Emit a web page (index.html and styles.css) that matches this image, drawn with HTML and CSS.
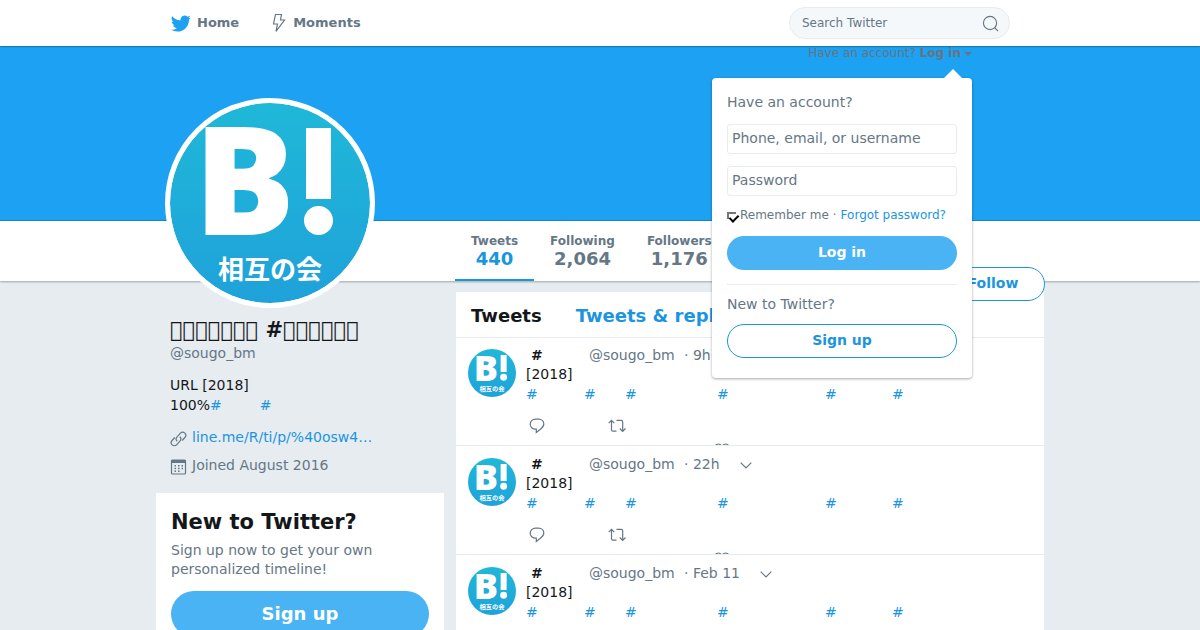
FILE: index.html
```html
<!DOCTYPE html>
<html lang="en">
<head>
<meta charset="utf-8">
<meta name="viewport" content="width=device-width, initial-scale=1">
<title>@sougo_bm | Twitter</title>
<link rel="stylesheet" href="styles.css">
</head>
<body>
<svg class="defs" aria-hidden="true">
  <defs>
    <linearGradient id="sky" x1="0" y1="0" x2="0" y2="1">
      <stop offset="0" stop-color="#1fb8d8"/>
      <stop offset="1" stop-color="#1fa2da"/>
    </linearGradient>
    <symbol id="logo" viewBox="0 0 200 200">
      <circle cx="100" cy="100" r="100" fill="url(#sky)"/>
      <text class="logo-b" x="24" y="132">B</text>
      <rect x="136" y="25" width="25" height="71" fill="#fff"/>
      <circle cx="148.500" cy="117.500" r="14.500" fill="#fff"/>
      <text class="logo-name" x="100" y="176" text-anchor="middle">相互の会</text>
    </symbol>
    <symbol id="reply" viewBox="0 0 16 16">
      <path d="M6.500 1.200h3c3 0 5.300 2 5.300 4.900 0 2.300-1.400 3.700-3.400 5.200L7.300 14.500v-3.400h-.8c-3 0-5.300-2-5.300-4.900s2.300-5 5.300-5z"/>
    </symbol>
    <symbol id="retweet" viewBox="0 0 18 14">
      <path d="M.7 4.200 3.500 1.300 6.300 4.200M3.500 1.500v9.300c0 .9.500 1.400 1.400 1.400H8.500M8.500 1.300h4.800c.9 0 1.400.5 1.400 1.400v9.300M11.800 9.500l2.900 2.900 2.800-2.900"/>
    </symbol>
    <symbol id="heart" viewBox="0 0 16 14">
      <path d="M8 3.500C7 1.600 5.800 1 4.500 1 2.400 1 1 2.600 1 4.600c0 3.200 3.500 6.100 7 8.400 3.500-2.300 7-5.200 7-8.400C15 2.600 13.600 1 11.500 1 10.200 1 9 1.600 8 3.500z"/>
    </symbol>
    <symbol id="chevron" viewBox="0 0 12 7">
      <path d="M.7.7 6 6 11.300.7"/>
    </symbol>
  </defs>
</svg>

<header class="topbar">
  <div class="container topbar-row">
    <nav class="global-nav">
      <a class="nav-link" href="#home">
        <svg class="bird" viewBox="0 0 24 20"><path d="M23.600 2.700c-.9.400-1.800.7-2.800.8 1-.6 1.800-1.600 2.100-2.700-.9.600-2 1-3.100 1.200A4.900 4.900 0 0 0 11.500 6.400C7.500 6.200 3.900 4.300 1.500 1.300a4.900 4.900 0 0 0 1.500 6.500c-.8 0-1.500-.2-2.200-.6v.1c0 2.400 1.700 4.300 3.900 4.800-.7.200-1.500.2-2.200.1.600 2 2.400 3.300 4.600 3.400A9.800 9.800 0 0 1 .1 17.500a13.800 13.800 0 0 0 7.500 2.200c9.100 0 14-7.500 14-14v-.6c.9-.7 1.800-1.600 2-2.400z"/></svg>
        <span>Home</span>
      </a>
      <a class="nav-link" href="#moments">
        <svg class="bolt line-icon" viewBox="0 0 14 20"><path d="M3.500 1.500h6L8.500 7h4L4 18.300 5.500 11H1.500z"/></svg>
        <span>Moments</span>
      </a>
    </nav>
    <form class="search">
      <input class="search-input" type="search" placeholder="Search Twitter" aria-label="Search Twitter">
      <button class="search-button" type="button" aria-label="Search">
        <svg class="line-icon" viewBox="0 0 18 18"><circle cx="8.500" cy="8.500" r="7"/><path d="m13.500 13.500 3.500 3.500"/></svg>
      </button>
    </form>
    <div class="session">
      <a class="session-link" href="#login">Have an account? <b>Log in</b><i class="caret"></i></a>
      <div class="dropdown">
        <form class="signin">
          <p class="dropdown-title">Have an account?</p>
          <input class="field" type="text" placeholder="Phone, email, or username" aria-label="Phone, email, or username">
          <input class="field" type="password" placeholder="Password" aria-label="Password">
          <div class="remember">
            <input class="tick" id="remember" type="checkbox" checked>
            <label for="remember">Remember me</label><span>·</span><a href="#forgot">Forgot password?</a>
          </div>
          <button class="button primary" type="button">Log in</button>
        </form>
        <div class="signup">
          <p class="dropdown-title">New to Twitter?</p>
          <button class="button outline" type="button">Sign up</button>
        </div>
      </div>
    </div>
  </div>
</header>

<section class="banner"></section>
<section class="profile-bar">
  <div class="container profile-row">
    <svg class="profile-photo" role="img" aria-label="Profile photo"><use href="#logo"/></svg>
    <nav class="stats">
      <a class="stat active" href="#tweets"><span>Tweets</span><b>440</b></a>
      <a class="stat" href="#following"><span>Following</span><b>2,064</b></a>
      <a class="stat" href="#followers"><span>Followers</span><b>1,176</b></a>
    </nav>
    <button class="button outline follow" type="button">Follow</button>
  </div>
</section>

<main class="container columns">
  <aside class="sidebar">
    <div class="bio">
      <h1 class="name">&#xE000;&#xE000;&#xE000;&#xE000;&#xE000;&#xE000;&#xE000; #&#xE000;&#xE000;&#xE000;&#xE000;&#xE000;&#xE000;</h1>
      <a class="handle" href="#profile">@sougo_bm</a>
      <p class="about">URL [2018]<br>100%<a class="bio-tag" href="#tag">#</a><a href="#tag">#</a></p>
      <p class="meta">
        <svg class="line-icon" viewBox="0 0 16 16"><path d="M6.700 10.300a3.200 3.200 0 0 1-.1-4.500l3.300-3.600a3.100 3.100 0 0 1 4.500 4.300l-2.700 3M9.300 5.700a3.200 3.200 0 0 1 .1 4.500l-3.300 3.600a3.100 3.100 0 0 1-4.500-4.300l2.700-3"/></svg>
        <a href="#site">line.me/R/ti/p/%40osw4…</a>
      </p>
      <p class="meta">
        <svg class="line-icon" viewBox="0 0 16 16"><rect x="1" y="1" width="14" height="14" rx="1"/><path d="M1 2.500h14" stroke-width="3"/><path d="M4 6.800h9M4 9.500h9M4 12.200h6" stroke-dasharray="1.500 2" stroke-width="1.500"/></svg>
        <span>Joined August 2016</span>
      </p>
    </div>
    <section class="join">
      <h2>New to Twitter?</h2>
      <p>Sign up now to get your own personalized timeline!</p>
      <button class="button primary large" type="button">Sign up</button>
    </section>
  </aside>

  <section class="timeline">
    <div class="tabs">
      <h2>Tweets</h2>
      <a href="#replies">Tweets &amp; replies</a>
    </div>
    <article class="tweet">
      <svg class="avatar"><use href="#logo"/></svg>
      <div class="tweet-body">
        <div class="byline"><b>#</b><span class="user">@sougo_bm</span><a href="#status">· 9h</a></div>
        <p>[2018]</p>
        <p class="tags"><a href="#tag">#</a><a href="#tag">#</a><a href="#tag">#</a><a href="#tag">#</a><a href="#tag">#</a><a href="#tag">#</a></p>
        <div class="actions">
          <button type="button" aria-label="Reply"><svg class="line-icon"><use href="#reply"/></svg></button>
          <button type="button" aria-label="Retweet"><svg class="line-icon wide"><use href="#retweet"/></svg></button>
          <button class="like" type="button" aria-label="Like"><svg class="line-icon"><use href="#heart"/></svg></button>
        </div>
      </div>
    </article>
    <article class="tweet">
      <svg class="avatar"><use href="#logo"/></svg>
      <div class="tweet-body">
        <div class="byline"><b>#</b><span class="user">@sougo_bm</span><a href="#status">· 22h</a><button type="button" aria-label="More"><svg class="line-icon more"><use href="#chevron"/></svg></button></div>
        <p>[2018]</p>
        <p class="tags"><a href="#tag">#</a><a href="#tag">#</a><a href="#tag">#</a><a href="#tag">#</a><a href="#tag">#</a><a href="#tag">#</a></p>
        <div class="actions">
          <button type="button" aria-label="Reply"><svg class="line-icon"><use href="#reply"/></svg></button>
          <button type="button" aria-label="Retweet"><svg class="line-icon wide"><use href="#retweet"/></svg></button>
          <button class="like" type="button" aria-label="Like"><svg class="line-icon"><use href="#heart"/></svg></button>
        </div>
      </div>
    </article>
    <article class="tweet">
      <svg class="avatar"><use href="#logo"/></svg>
      <div class="tweet-body">
        <div class="byline"><b>#</b><span class="user">@sougo_bm</span><a href="#status">· Feb 11</a><button type="button" aria-label="More"><svg class="line-icon more"><use href="#chevron"/></svg></button></div>
        <p>[2018]</p>
        <p class="tags"><a href="#tag">#</a><a href="#tag">#</a><a href="#tag">#</a><a href="#tag">#</a><a href="#tag">#</a><a href="#tag">#</a></p>
      </div>
    </article>
  </section>
</main>
</body>
</html>
```
FILE: styles.css
```css
* { box-sizing: border-box; }

body {
  margin: 0;
  height: 100vh;
  overflow: hidden;
  background: #e6ecf0;
  color: #14171a;
  font: 14px/20px "DejaVu Sans", sans-serif;
}

h1, h2, p { margin: 0; }
a { color: #1b95e0; text-decoration: none; }
button { padding: 0; border: 0; background: none; font: inherit; color: inherit; }
svg { display: block; flex: none; }

.defs { position: absolute; width: 0; height: 0; }
.container { max-width: 888px; margin: 0 auto; }
.line-icon { width: 16px; height: 16px; fill: none; stroke: #657786; stroke-width: 1.2px; }

.logo-b { font: 800 150px "Open Sans", sans-serif; fill: #fff; }
.logo-name { font: 700 26px "Noto Sans CJK JP", sans-serif; fill: #fff; }

/* Top bar */
.topbar { position: relative; z-index: 2; background: #fff; box-shadow: 0 0 2px rgba(0, 0, 0, 0.7); }
.topbar-row { position: relative; display: flex; align-items: center; justify-content: space-between; height: 46px; padding: 0 34px 0 15px; }
.global-nav { display: flex; gap: 32px; }
.nav-link { display: flex; align-items: center; gap: 6px; color: #657786; font-size: 13px; font-weight: 700; }
.bird { width: 20px; height: 17px; fill: #1da1f2; }
.bolt { width: 16px; height: 20px; }

.search { display: flex; align-items: center; width: 221px; height: 32px; padding: 0 10px 0 12px; border: 1px solid #e6ecf0; border-radius: 16px; background: #f5f8fa; }
.search-input { flex: 1; min-width: 0; padding: 0; border: 0; background: none; font: 12px "DejaVu Sans", sans-serif; }
.search-button .line-icon { width: 17px; height: 17px; }
input::placeholder { color: #657786; opacity: 1; }

.session { position: absolute; top: 45px; right: 72px; }
.session-link { display: block; color: #66757f; font-size: 12px; line-height: 16px; white-space: nowrap; }
.caret { display: inline-block; margin-left: 3px; border: 4px solid transparent; border-top-color: #66757f; border-bottom: 0; vertical-align: middle; }

.dropdown { position: absolute; top: 33px; right: 0; width: 260px; padding: 14px 15px 20px; border-radius: 4px; background: #fff; color: #657786; box-shadow: 0 1px 3px rgba(0, 0, 0, 0.35); }
.dropdown::before { content: ""; position: absolute; top: -9px; right: 10px; border: 9px solid transparent; border-top: 0; border-bottom-color: #fff; }
.signin { display: flex; flex-direction: column; }
.dropdown-title { line-height: 20px; }
.field { height: 30px; margin-top: 12px; padding: 0 4px 2px; border: 1px solid #e6ecf0; border-radius: 3px; font: inherit; }
.remember { display: flex; align-items: center; gap: 4px; height: 20px; margin: 9px 0 11px; font-size: 12px; }
.tick { appearance: none; position: relative; width: 9px; height: 7px; margin: 1px 0 0; border: 2px solid #767676; border-width: 2px 0 0 2px; }
.tick:checked::after { content: ""; position: absolute; left: 2px; top: -1px; width: 4px; height: 7px; border: solid #000; border-width: 0 2px 2px 0; transform: rotate(45deg); }

.button { height: 34px; padding-bottom: 2px; border-radius: 100px; font-weight: 700; text-align: center; }
.primary { background: #4ab3f4; color: #fff; }
.outline { border: 1px solid #1b95e0; background: #fff; color: #1b95e0; }
.signup { display: grid; gap: 10px; margin-top: 14px; padding-top: 9px; border-top: 1px solid #e6ecf0; }

/* Profile header */
.banner { height: 175px; background: #1da1f2; border-bottom: 1px solid #1b85c5; }
.profile-bar { background: #fff; box-shadow: 0 1px 2px rgba(0, 0, 0, 0.3); }
.profile-row { position: relative; display: flex; justify-content: flex-end; }
.profile-photo { position: absolute; left: 9px; top: -123px; width: 210px; height: 210px; border: 5px solid #fff; border-radius: 50%; background: #fff; }
.stats { display: flex; width: 589px; }
.stat { display: flex; flex-direction: column; height: 60px; padding: 12px 16px 0; color: #657786; font-size: 12px; font-weight: 700; line-height: 16px; text-align: center; }
.stat b { font-size: 18px; line-height: 20px; }
.active { border-bottom: 2px solid #1b95e0; }
.active b { color: #1b95e0; }
.follow { position: absolute; right: -1px; top: 46px; width: 104px; }

/* Columns */
.columns { display: grid; grid-template-columns: 288px 1fr; gap: 12px; align-items: start; padding-top: 11px; }
.bio { padding: 26px 14px 18px; }
.name { font-size: 21px; line-height: 25px; white-space: nowrap; }
.handle { color: #657786; }
.about { margin: 12px 0; }
.bio-tag { margin-right: 38px; }
.meta { display: flex; align-items: center; gap: 5px; color: #657786; }
.meta + .meta { margin-top: 8px; }
.meta .line-icon { margin-top: 4px; width: 17px; }
.join { padding: 17px 15px; background: #fff; }
.join h2 { font-size: 21px; line-height: 24px; }
.join p { margin: 7px 0 12px; color: #657786; line-height: 19px; }
.large { width: 100%; height: 46px; padding: 0; font-size: 18px; }

/* Timeline */
.timeline { background: #fff; }
.tabs { display: flex; gap: 34px; padding: 13px 15px 10px; border-bottom: 1px solid #e6ecf0; font-size: 18px; font-weight: 700; line-height: 22px; }
.tabs h2 { font-size: 18px; }
.tweet { display: flex; gap: 10px; height: 109px; padding: 8px 12px; border-bottom: 1px solid #e6ecf0; overflow: hidden; }
.tweet:first-of-type { height: 108px; padding-top: 7px; }
.avatar { width: 48px; height: 48px; margin-top: 4px; }
.byline { display: flex; align-items: center; height: 19px; padding-left: 5px; color: #657786; }
.byline b { width: 58px; color: #14171a; }
.byline .user { width: 95px; }
.byline a { color: #657786; }
.byline button { margin-left: 20px; }
.line-icon.more { width: 12px; height: 7px; margin-top: 3px; }
.tweet p { line-height: 20px; }
.tags { display: grid; grid-template-columns: 58px 41px 92px 108px 67px auto; }
.actions { display: grid; grid-template-columns: 79px 106px auto; align-items: start; padding: 14px 0 0 3px; }
.line-icon.wide { width: 18px; height: 14px; margin-top: 1px; }
.like { margin-top: 24px; }
```
